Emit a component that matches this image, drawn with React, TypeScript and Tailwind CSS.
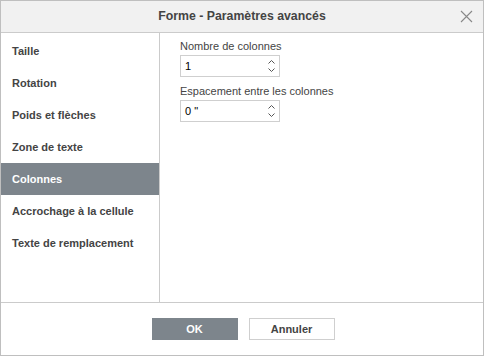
import React from "react";

const items = [
  "Taille",
  "Rotation",
  "Poids et flèches",
  "Zone de texte",
  "Colonnes",
  "Accrochage à la cellule",
  "Texte de remplacement",
];

function Spin({ value }: { value: string }) {
  return (
    <div className="flex h-[22px] w-[100px] items-center border border-[#cfcfcf] bg-white">
      <div className="flex-1 pl-[4px] text-[11px] text-black">{value}</div>
      <div className="flex h-full w-[14px] flex-col items-center justify-center pr-[2px]">
        <svg width="7" height="4" viewBox="0 0 7 4" className="mb-[4px]">
          <path d="M0.5 3.5 L3.5 0.5 L6.5 3.5" fill="none" stroke="#555" strokeWidth="1" />
        </svg>
        <svg width="7" height="4" viewBox="0 0 7 4">
          <path d="M0.5 0.5 L3.5 3.5 L6.5 0.5" fill="none" stroke="#555" strokeWidth="1" />
        </svg>
      </div>
    </div>
  );
}

export default function App() {
  return (
    <div
      className="flex h-[356px] w-[484px] flex-col border border-[#bfbfbf] bg-white text-[#444]"
      style={{ fontFamily: '"Liberation Sans", Arial, sans-serif' }}
    >
      <div className="relative flex h-[32px] shrink-0 items-center justify-center border-b border-[#cbcbcb] bg-[#f1f1f1]">
        <span className="text-[12.3px] font-bold text-[#444]">Forme - Paramètres avancés</span>
        <svg className="absolute right-[10px] top-[9px]" width="13" height="13" viewBox="0 0 13 13">
          <path d="M1 1 L12 12 M12 1 L1 12" stroke="#888" strokeWidth="1.1" />
        </svg>
      </div>
      <div className="flex flex-1 border-b border-[#cbcbcb]">
        <div className="flex w-[159px] flex-col border-r border-[#cbcbcb] pt-[2px]">
          {items.map((it) => (
            <div
              key={it}
              className={
                "flex h-[32px] items-center pl-[11px] text-[11px] font-bold " +
                (it === "Colonnes" ? "bg-[#7d858c] text-white" : "text-[#444]")
              }
            >
              {it}
            </div>
          ))}
        </div>
        <div className="flex flex-col pl-[20px] pt-[6px]">
          <div className="text-[11px] leading-[14px] text-[#444]">Nombre de colonnes</div>
          <div className="mt-[2px]">
            <Spin value="1" />
          </div>
          <div className="mt-[7px] text-[11px] leading-[14px] text-[#444]">Espacement entre les colonnes</div>
          <div className="mt-[2px]">
            <Spin value={'0 "'} />
          </div>
        </div>
      </div>
      <div className="flex h-[52px] shrink-0 items-center justify-center gap-[11px]">
        <div className="ml-[2px] flex h-[22px] w-[86px] items-center justify-center bg-[#7d858c] text-[11px] font-bold text-white">
          OK
        </div>
        <div className="flex h-[22px] w-[86px] items-center justify-center border border-[#cfcfcf] bg-white text-[11px] font-bold text-[#444]">
          Annuler
        </div>
      </div>
    </div>
  );
}
